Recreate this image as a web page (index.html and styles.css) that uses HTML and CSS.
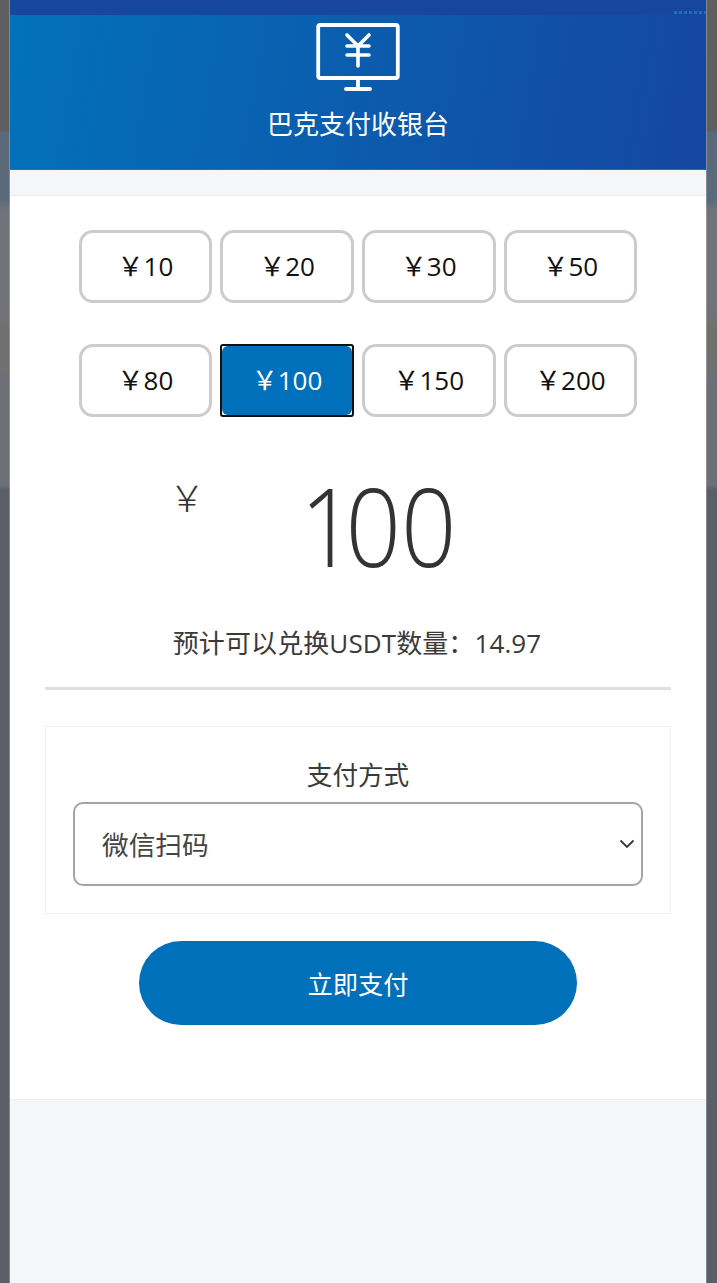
FILE: index.html
```html
<!DOCTYPE html>
<html lang="zh-CN">
<head>
<meta charset="utf-8">
<title>巴克支付收银台</title>
<link rel="stylesheet" href="styles.css">
</head>
<body>
<main class="cashier">
  <header class="cashier-header">
    <div class="header-band"></div>
    <svg class="monitor-icon" viewBox="0 0 84 70" width="84" height="70" aria-hidden="true">
      <rect x="2.2" y="2" width="79.6" height="53" rx="2" fill="none" stroke="#fff" stroke-width="3.8"/>
      <path d="M42 56v10M30 66h24" fill="none" stroke="#fff" stroke-width="3.8" stroke-linecap="round"/>
      <path d="M31 12l11 11 11-11M31 23h22M31 32h22M42 23v20" fill="none" stroke="#fff" stroke-width="3.6" stroke-linecap="round" stroke-linejoin="round"/>
    </svg>
    <h1 class="cashier-title">巴克支付收银台</h1>
  </header>

  <div class="cashier-gap"></div>

  <section class="cashier-body">
    <div class="amount-grid">
      <button class="amount" type="button">￥10</button>
      <button class="amount" type="button">￥20</button>
      <button class="amount" type="button">￥30</button>
      <button class="amount" type="button">￥50</button>
      <button class="amount" type="button">￥80</button>
      <button class="amount amount-selected" type="button">￥100</button>
      <button class="amount" type="button">￥150</button>
      <button class="amount" type="button">￥200</button>
    </div>

    <div class="total">
      <span class="total-currency">￥</span>
      <span class="total-value"><span class="digit-one">1</span>00</span>
    </div>

    <p class="estimate">预计可以兑换USDT数量：14.97</p>

    <div class="pay-method">
      <label class="pay-label" for="pay-select">支付方式</label>
      <div class="select-wrap">
        <select class="pay-select" id="pay-select">
          <option>微信扫码</option>
        </select>
        <svg class="select-chevron" viewBox="0 0 16 10" width="16" height="10" aria-hidden="true">
          <path d="M1.5 1.5L8 8l6.5-6.5" fill="none" stroke="#343a40" stroke-width="1.8"/>
        </svg>
      </div>
    </div>

    <button class="pay-button" type="button">立即支付</button>
  </section>
</main>
</body>
</html>
```

FILE: styles.css
```css
* { box-sizing: border-box; }

html, body { margin: 0; height: 100%; }

body {
  height: 1283px;
  overflow: hidden;
  font-family: "Open Sans", "Noto Sans CJK SC", sans-serif;
  color: #333;
  background: linear-gradient(to bottom,
    #5f5f62 0, #5f5f62 130px,
    #5b6a7b 133px, #5b6a7b 200px,
    #71737a 210px, #71737a 310px,
    #6f716e 330px, #6f7172 370px,
    #6c6f76 380px, #6c6f76 485px,
    #5c5f68 490px, #5c5f68 100%);
}

.cashier {
  width: 696px;
  height: 1283px;
  margin-left: 10px;
  background: #f5f6fa;
  box-shadow: 0 0 0 1px rgba(255, 255, 255, .25);
  display: flex;
  flex-direction: column;
}

.cashier-header {
  height: 170px;
  display: flex;
  flex-direction: column;
  align-items: center;
  color: #fff;
  background: linear-gradient(100deg, #0272bb 0%, #1546a0 100%);
  border-bottom: 1px solid #0f78c8;
  flex: none;
}

.header-band {
  position: relative;
  width: 100%;
  height: 15px;
  background: #17469f;
  flex: none;
}

.header-band::after {
  content: "";
  position: absolute;
  right: 0;
  bottom: 1px;
  width: 32px;
  height: 3px;
  background: repeating-linear-gradient(to right, #1f6fbe 0 3px, #17469f 3px 5px);
}

.monitor-icon {
  display: block;
  margin-top: 8px;
  flex: none;
}

.cashier-title {
  margin: 12px 0 0;
  font-size: 26px;
  font-weight: 400;
  line-height: 38px;
}

.cashier-gap {
  height: 25px;
  flex: none;
}

.cashier-body {
  height: 905px;
  flex: none;
  background: #fff;
  border-top: 1px solid #eeeff2;
  border-bottom: 1px solid #eeeff2;
  padding: 34px 35px 0;
  display: flex;
  flex-direction: column;
  align-items: stretch;
}

.amount-grid {
  width: 558.6px;
  margin-left: 33.6px;
  display: grid;
  grid-template-columns: repeat(4, 1fr);
  grid-auto-rows: 73px;
  column-gap: 8px;
  row-gap: 41px;
}

.amount {
  position: relative;
  z-index: 0;
  padding: 0 0 1px;
  font-family: inherit;
  font-size: 26px;
  line-height: 1;
  color: #111;
  background: #fff;
  border: 3px solid #ccc;
  border-radius: 14px;
}

.amount-selected {
  color: #fff;
  border: 2px solid #111;
  border-radius: 3px;
}

.amount-selected::before {
  content: "";
  position: absolute;
  inset: 0;
  z-index: -1;
  background: #0070bb;
  border-radius: 6px;
}

.total {
  margin-top: 44px;
  height: 130px;
  display: flex;
  align-items: flex-start;
}

.total-currency {
  margin: 16px 0 0 124px;
  width: 36px;
  font-size: 36px;
  font-weight: 300;
  line-height: 1.2;
  color: #333;
}

.total-value {
  margin-left: 95px;
  font-size: 108px;
  font-weight: 300;
  line-height: 130px;
  color: #333;
  transform: scaleX(.9);
  transform-origin: left center;
}

.digit-one {
  letter-spacing: -11px;
}

.estimate {
  margin: 33px 0 0;
  padding: 0 2px 25px 0;
  font-size: 26px;
  letter-spacing: .1px;
  line-height: 38px;
  text-align: center;
  border-bottom: 3px solid #e0e0e0;
  color: #3a3a3a;
}

.pay-method {
  margin-top: 36px;
  height: 188px;
  padding: 30px 27px 0;
  border: 1px solid #efefef;
  display: flex;
  flex-direction: column;
}

.pay-label {
  font-size: 25.6px;
  line-height: 38px;
  text-align: center;
  color: #3a3a3a;
}

.select-wrap {
  position: relative;
  margin-top: 7px;
}

.pay-select {
  display: block;
  width: 100%;
  height: 84px;
  padding: 0 27px;
  font-family: inherit;
  font-size: 26.7px;
  color: #444;
  background: #fff;
  border: 2px solid #a0a5a9;
  border-radius: 10px;
  appearance: none;
}

.select-chevron {
  position: absolute;
  right: 8px;
  top: 37px;
  pointer-events: none;
}

.pay-button {
  align-self: center;
  margin-top: 27px;
  width: 438px;
  height: 84px;
  font-family: inherit;
  font-size: 25.3px;
  color: #fff;
  background: #0070bb;
  border: 0;
  border-radius: 42px;
}
```
